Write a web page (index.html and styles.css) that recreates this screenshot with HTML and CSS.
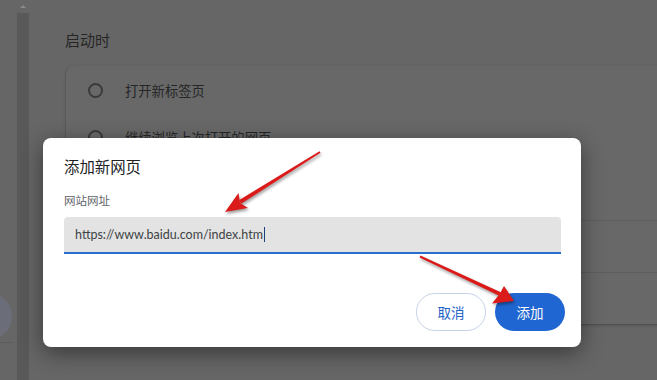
FILE: index.html
```html
<!DOCTYPE html>
<html>
<head>
	<meta charset="utf-8">
	<meta name="viewport" content="width=device-width, initial-scale=1">
	<link rel="stylesheet" href="styles.css">
</head>
<body>
	<div class="page">
		<div class="sidebar">
			<div class="avatar"></div>
			<div class="sidebar-line"></div>
		</div>
		<div class="scrollbar">
			<div class="scroll-arrow"><span></span></div>
			<div class="scroll-track"></div>
		</div>
		<div class="main">
			<h2 class="section-title">启动时</h2>
			<div class="card">
				<div class="row"><span class="radio"></span>打开新标签页</div>
				<div class="row"><span class="radio"></span>继续浏览上次打开的网页</div>
				<div class="row row-tall"><span class="radio"></span></div>
				<div class="row row-line"></div>
				<div class="row row-line"></div>
			</div>
		</div>
	</div>

	<div class="dialog">
		<h3 class="dialog-title">添加新网页</h3>
		<label class="field-label">网站网址</label>
		<div class="field">https://www.baidu.com/index.htm<span class="caret"></span></div>
		<div class="actions">
			<button class="btn btn-cancel">取消</button>
			<button class="btn btn-add">添加</button>
		</div>
	</div>

	<!-- annotation arrows -->
	<svg class="arrows" width="657" height="380" viewBox="0 0 657 380">
		<g class="arrow">
			<polygon points="320.5,152.8 241.1,203.7 238.9,200.3 319.5,151.2" />
			<polygon points="225,212 248,208 240,203 238.5,193" />
		</g>
		<g class="arrow">
			<polygon points="419.6,257.4 499.2,295.8 500.8,292.2 420.4,255.6" />
			<polygon points="514,301 492,303.5 499.6,293.9 504,286" />
		</g>
	</svg>
</body>
</html>
```

FILE: styles.css
```css
body {
	margin: 0;
	background-color: #666;
	font-family: "Noto Sans", "Noto Sans CJK SC", sans-serif;
	overflow: hidden;
}

.page {
	display: flex;
	height: 380px;
}

/* left edge of the settings page */
.sidebar {
	width: 17px;
	display: flex;
	flex-direction: column;
}

.avatar {
	width: 47px;
	height: 47px;
	margin-top: 293px;
	margin-left: -35px;
	border-radius: 50%;
	background-color: #6b6e78;
}

.sidebar-line {
	width: 14px;
	height: 1px;
	margin-top: 2px;
	background-color: #5c5c5c;
}

.scrollbar {
	width: 12px;
	display: flex;
	flex-direction: column;
}

.scroll-arrow {
	height: 13px;
	display: flex;
	justify-content: center;
	align-items: center;
}

.scroll-arrow span {
	border-left: 3px solid transparent;
	border-right: 3px solid transparent;
	border-bottom: 3px solid #8a8a8a;
}

.scroll-track {
	flex: 1;
	background-color: #595959;
}

.main {
	flex: 1;
	padding-left: 36px;
	overflow: hidden;
}

.section-title {
	margin: 0;
	padding-top: 30px;
	font-size: 15px;
	font-weight: normal;
	line-height: 20px;
	color: #262626;
}

.card {
	margin-top: 16px;
	margin-left: 1px;
	margin-right: -20px;
	padding-top: 1px;
	border-radius: 8px;
	background-color: #686868;
	box-shadow: 0 1px 3px rgba(0, 0, 0, 0.3);
}

.row {
	display: flex;
	align-items: center;
	height: 47px;
	padding-left: 22px;
	font-size: 13.3px;
	color: #262626;
}

.row-tall {
	height: 59px;
}

.row-line {
	height: 51px;
	border-top: 1px solid #5d5d5d;
}

.radio {
	width: 11px;
	height: 11px;
	margin-right: 22px;
	border: 2px solid #3a3a3a;
	border-radius: 50%;
}

/* modal dialog */
.dialog {
	position: absolute;
	left: 43px;
	top: 138px;
	width: 538px;
	height: 209px;
	box-sizing: border-box;
	padding: 20px 16px 16px 21px;
	border-radius: 8px;
	background-color: #fff;
	box-shadow: 0 6px 22px rgba(0, 0, 0, 0.45);
}

.dialog-title {
	margin: 0;
	font-size: 15.4px;
	font-weight: normal;
	line-height: 20px;
	color: #202124;
}

.field-label {
	display: block;
	margin-top: 15px;
	font-size: 11.5px;
	line-height: 16px;
	color: #5f6368;
}

.field {
	display: flex;
	align-items: center;
	height: 35px;
	margin-top: 8px;
	margin-right: 4px;
	padding-left: 11px;
	border-bottom: 2px solid #2a6dd0;
	border-radius: 4px 4px 0 0;
	background-color: #e2e3e2;
	font-family: "Lato", "Noto Sans", sans-serif;
	font-size: 12.5px;
	color: #404346;
}

.caret {
	width: 1px;
	height: 15px;
	margin-left: 1px;
	background-color: #1f3f7a;
}

.actions {
	display: flex;
	justify-content: flex-end;
	gap: 9px;
	margin-top: 39px;
}

.btn {
	width: 70px;
	height: 38px;
	border-radius: 19px;
	font-family: "Noto Sans CJK SC", sans-serif;
	font-size: 13.5px;
	cursor: pointer;
}

.btn-cancel {
	border: 1px solid #c5d3e9;
	background-color: #fff;
	color: #1b61c6;
}

.btn-add {
	border: none;
	background-color: #1f66d2;
	color: #fff;
}

.arrows {
	position: absolute;
	left: 0;
	top: 0;
	pointer-events: none;
}

.arrow {
	filter: drop-shadow(1px 2px 1.5px rgba(0, 0, 0, 0.4));
}

.arrow polygon {
	fill: #db1a1a;
}
```
